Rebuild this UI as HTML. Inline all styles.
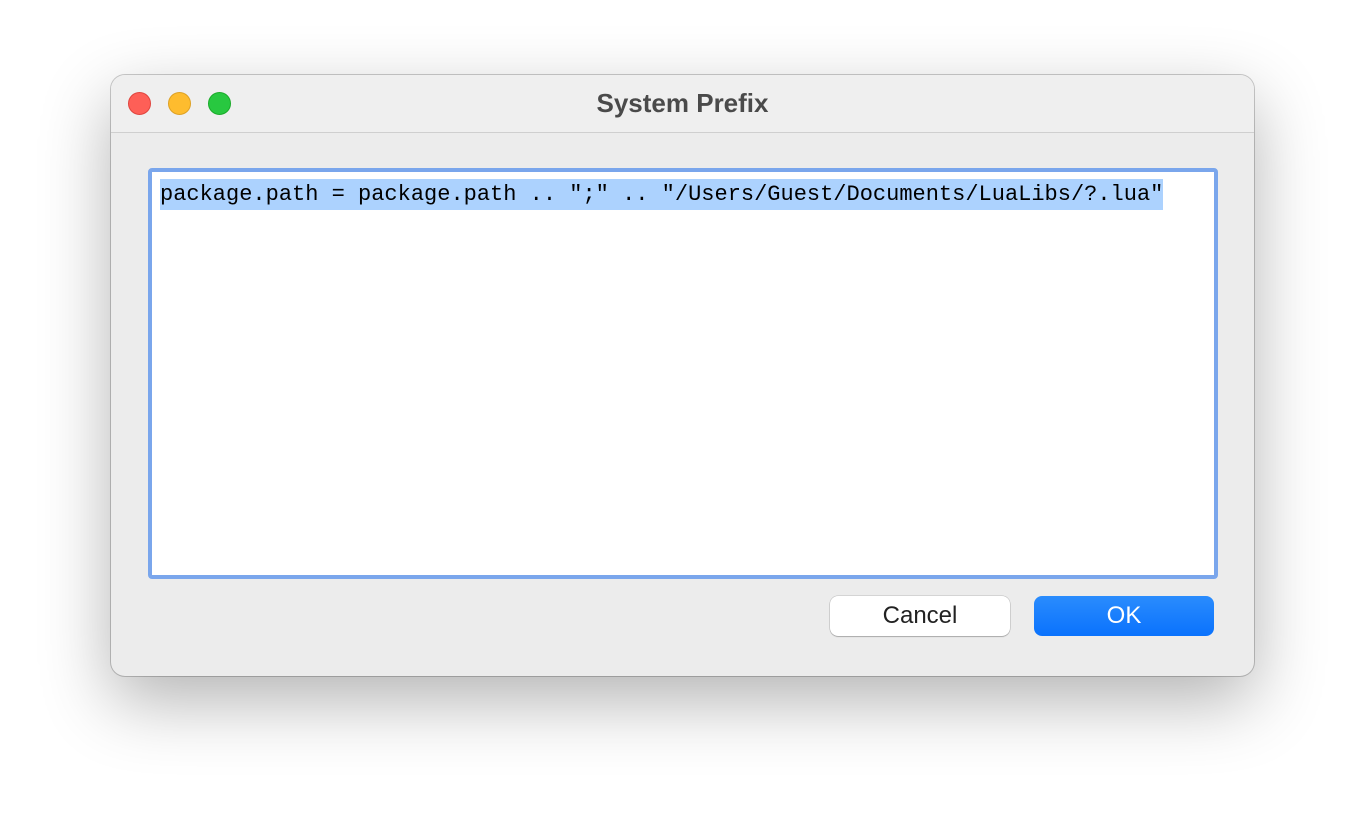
<!DOCTYPE html>
<html><head><style>
body{margin:0;width:1366px;height:824px;background:#fff;position:relative;overflow:hidden;font-family:"Liberation Sans",sans-serif}
.win{position:absolute;left:111px;top:75px;width:1143px;height:601px;background:#ececec;border-radius:14px;box-shadow:0 25px 70px rgba(0,0,0,0.3),0 0 0 1px rgba(0,0,0,0.2);overflow:hidden}
.tb{position:absolute;left:0;top:0;width:100%;height:57px;background:#efefef;border-bottom:1px solid #cfcfcf}
.dot{position:absolute;top:17px;width:23px;height:23px;border-radius:50%;box-sizing:border-box}
.title{position:absolute;top:0;width:100%;text-align:center;line-height:56px;font-size:26px;font-weight:bold;color:#4a4a4a}
.box{position:absolute;left:37px;top:93px;width:1070px;height:411px;box-sizing:border-box;border:4px solid #7aa6ec;border-radius:4px;background:#fff}
.sel{position:absolute;left:8px;top:7px;height:31px;background:#acd2fe;font-family:"Liberation Mono",monospace;font-size:22px;line-height:31px;color:#000;white-space:pre}
.btn{position:absolute;top:521px;width:180px;height:40px;border-radius:8px;text-align:center;line-height:40px;font-size:24px;box-sizing:border-box}
</style></head><body>
<div class="win">
<div class="tb">
<div class="dot" style="left:17px;background:#fe5f57;border:1px solid #e0443e"></div>
<div class="dot" style="left:57px;background:#febc2e;border:1px solid #dea123"></div>
<div class="dot" style="left:97px;background:#28c840;border:1px solid #1aab29"></div>
<div class="title">System Prefix</div>
</div>
<div class="box"><div class="sel">package.path = package.path .. ";" .. "/Users/Guest/Documents/LuaLibs/?.lua"</div></div>
<div class="btn" style="left:719px;background:#fff;color:#222;box-shadow:0 0 0 0.5px rgba(0,0,0,0.2),0 1px 1px rgba(0,0,0,0.2)">Cancel</div>
<div class="btn" style="left:923px;background:linear-gradient(#2a8cfd,#0a72fd);color:#fff">OK</div>
</div>
</body></html>
